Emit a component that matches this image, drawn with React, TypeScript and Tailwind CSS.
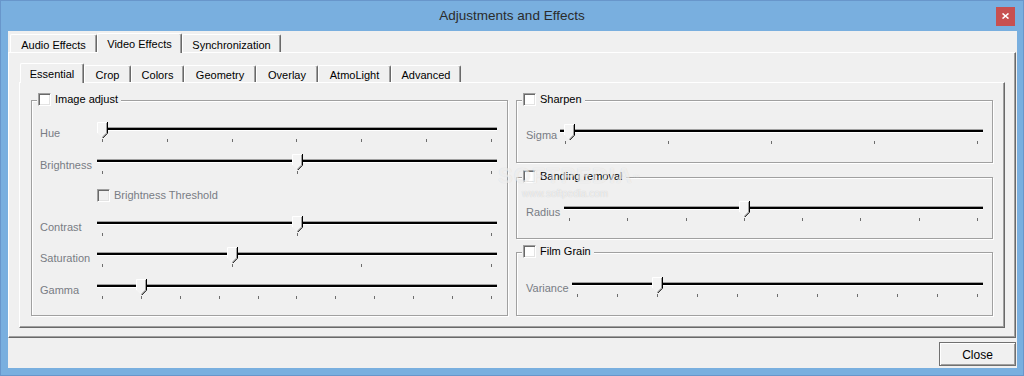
import type { CSSProperties, ReactNode } from "react";

const FONT = "font-['Liberation_Sans',Arial,sans-serif]";

type TabDef = { label: string; width: number };

const outerTabs: TabDef[] = [
  { label: "Audio Effects", width: 87 },
  { label: "Video Effects", width: 85 },
  { label: "Synchronization", width: 99 },
];

const innerTabs: TabDef[] = [
  { label: "Essential", width: 64 },
  { label: "Crop", width: 47 },
  { label: "Colors", width: 53 },
  { label: "Geometry", width: 72 },
  { label: "Overlay", width: 62 },
  { label: "AtmoLight", width: 73 },
  { label: "Advanced", width: 70 },
];

function Tab({ tab, selected, small }: { tab: TabDef; selected: boolean; small?: boolean }) {
  let height = "mb-px h-[18px] pt-[3px]";
  if (selected) height = small ? "h-[20px] pt-[1px]" : "h-[20px] pt-[2px]";
  else if (small) height = "mb-px h-[17px] pt-[2px]";
  return (
    <div
      style={{ width: tab.width }}
      className={`${height} relative flex shrink-0 items-center justify-center rounded-t-[2px] border-t border-l border-r border-t-white border-l-white border-r-[#696969] bg-[#f0f0f0] shadow-[inset_-1px_0_0_#a0a0a0] text-[11px] text-black ${
        selected ? "z-20" : "z-10"
      }`}
    >
      {tab.label}
    </div>
  );
}

function Checkbox({ disabled }: { disabled?: boolean }) {
  return (
    <span
      className={`block h-[13px] w-[13px] shrink-0 border border-t-[#a0a0a0] border-l-[#a0a0a0] border-r-white border-b-white shadow-[inset_1px_1px_0_#696969,inset_-1px_-1px_0_#e3e3e3] ${
        disabled ? "bg-[#f0f0f0]" : "bg-white"
      }`}
    />
  );
}

function Thumb({ style }: { style: CSSProperties }) {
  return (
    <svg width="11" height="16" viewBox="0 0 11 16" className="absolute top-0" style={style}>
      <polygon points="0,0 10.5,0 10.5,11 5.5,16 0,11" fill="#f4f4f4" />
      <path d="M0.5 11 V0.5 H9.5" fill="none" stroke="#ffffff" />
      <path d="M9.5 1 V11 L5.2 15.3" fill="none" stroke="#a0a0a0" />
      <path d="M10.5 0 V11.2 L5.8 16" fill="none" stroke="#000000" />
    </svg>
  );
}

function Slider({ ticks, value }: { ticks: number; value: number }) {
  return (
    <div className="relative h-[22px] flex-1">
      <div className="mt-[5px] h-[4px] border-t border-b border-t-[#a0a0a0] border-b-white bg-black" />
      <div className="mt-[8px] flex justify-between px-[5px]">
        {Array.from({ length: ticks }).map((_, i) => (
          <span key={i} className="block h-[3px] w-px bg-[#6d6d6d]" />
        ))}
      </div>
      <Thumb style={{ left: `calc((100% - 10px) * ${value})` }} />
    </div>
  );
}

function GroupBox({ title, className, children }: { title: string; className: string; children: ReactNode }) {
  return (
    <div
      className={`relative border border-[#a0a0a0] shadow-[inset_1px_1px_0_#fff,1px_1px_0_#fff] ${className}`}
    >
      <div className="absolute -top-[8px] left-[5px] flex items-center gap-[4px] bg-[#f0f0f0] pl-[1px] pr-[3px]">
        <Checkbox />
        <span className="text-[11px] leading-[13px] text-black">{title}</span>
      </div>
      {children}
    </div>
  );
}

function Row({ label, labelWidth, ticks, value, className }: {
  label: string;
  labelWidth: string;
  ticks: number;
  value: number;
  className?: string;
}) {
  return (
    <div className={`flex items-center ${className ?? ""}`}>
      <span className={`${labelWidth} shrink-0 text-[11px] text-[#787c84]`}>{label}</span>
      <Slider ticks={ticks} value={value} />
    </div>
  );
}

export default function App() {
  return (
    <div
      className={`${FONT} relative flex h-[376px] w-[1024px] flex-col overflow-hidden border border-[#6896cb] bg-[#79afdf]`}
    >
      {/* title bar */}
      <div className="grid h-[30px] shrink-0 grid-cols-[1fr_auto_1fr] items-center">
        <div />
        <span className="text-[13.5px] text-[#2b2b2b]">Adjustments and Effects</span>
        <div className="flex justify-end pr-[8px]">
          <div className="flex h-[19px] w-[19px] items-center justify-center bg-[#c75050]">
            <svg width="7" height="6" viewBox="0 0 7 6">
              <path d="M0.5 0.5 L6.5 5.5 M6.5 0.5 L0.5 5.5" stroke="#fff" strokeWidth="1.6" />
            </svg>
          </div>
        </div>
      </div>

      {/* client area */}
      <div className="ml-[7px] flex h-[337px] w-[1009px] flex-col bg-[#f0f0f0]">
        <div className="relative z-10 flex h-[22px] items-end pl-[2px]">
          {outerTabs.map((t, i) => (
            <Tab key={t.label} tab={t} selected={i === 1} />
          ))}
        </div>

        <div className="-mt-px mr-px border border-t-white border-l-white border-r-[#696969] border-b-[#696969] px-[10px] pb-[9px] shadow-[inset_-1px_-1px_0_#a0a0a0]">
          <div className="relative z-10 flex h-[30px] items-end pl-[1px]">
            {innerTabs.map((t, i) => (
              <Tab key={t.label} tab={t} selected={i === 0} small />
            ))}
          </div>

          <div className="-mt-px flex h-[246px] items-start gap-[8px] border border-t-white border-l-white border-r-[#696969] border-b-[#696969] px-[11px] pt-[17px] shadow-[inset_-1px_-1px_0_#a0a0a0]">
            {/* left column */}
            <GroupBox title="Image adjust" className="h-[216px] w-[477px] pt-[21px] pr-[10px] pl-[8px]">
              <Row label="Hue" labelWidth="w-[57px]" ticks={7} value={0} />
              <Row label="Brightness" labelWidth="w-[57px]" ticks={3} value={0.5} className="mt-[10px]" />
              <div className="mt-[8px] flex h-[22px] items-center gap-[4px] pl-[57px]">
                <Checkbox disabled />
                <span className="text-[11px] text-[#787c84]">Brightness Threshold</span>
              </div>
              <Row label="Contrast" labelWidth="w-[57px]" ticks={3} value={0.5} className="mt-[10px]" />
              <Row label="Saturation" labelWidth="w-[57px]" ticks={4} value={1 / 3} className="mt-[9px]" />
              <Row label="Gamma" labelWidth="w-[57px]" ticks={11} value={0.1} className="mt-[10px]" />
            </GroupBox>

            {/* right column */}
            <div className="flex w-[477px] flex-col">
              <GroupBox title="Sharpen" className="h-[63px] pt-[23px] pr-[9px] pl-[9px]">
                <Row label="Sigma" labelWidth="w-[34px]" ticks={5} value={0.01} />
              </GroupBox>
              <GroupBox title="Banding removal" className="mt-[14px] h-[62px] pt-[23px] pr-[9px] pl-[9px]">
                <Row label="Radius" labelWidth="w-[38px]" ticks={8} value={3 / 7} />
              </GroupBox>
              <GroupBox title="Film Grain" className="mt-[13px] h-[64px] pt-[24px] pr-[9px] pl-[9px]">
                <Row label="Variance" labelWidth="w-[46px]" ticks={11} value={0.2} />
              </GroupBox>
            </div>
          </div>
        </div>

        <div className="flex h-[30px] items-start justify-end pt-[4px] pr-px">
          <button className="h-[24px] w-[77px] border border-[#707070] bg-[#f0f0f0] pt-[1px] text-[12px] text-black shadow-[inset_1px_1px_0_#fff,inset_-1px_-1px_0_#a0a0a0]">
            Close
          </button>
        </div>
      </div>

      {/* watermark */}
      <div className="pointer-events-none absolute top-[163px] left-[497px] flex flex-col">
        <span className="text-[22px] font-bold leading-[24px] tracking-[1px] text-white/60 [text-shadow:0_0_1px_rgba(0,0,0,0.12)]">
          SOFTPEDIA<sup className="text-[7px]">™</sup>
        </span>
        <span className="ml-[24px] text-[10px] leading-[12px] text-white/70 [text-shadow:0_0_1px_rgba(0,0,0,0.2)]">
          www.softpedia.com
        </span>
      </div>
    </div>
  );
}
